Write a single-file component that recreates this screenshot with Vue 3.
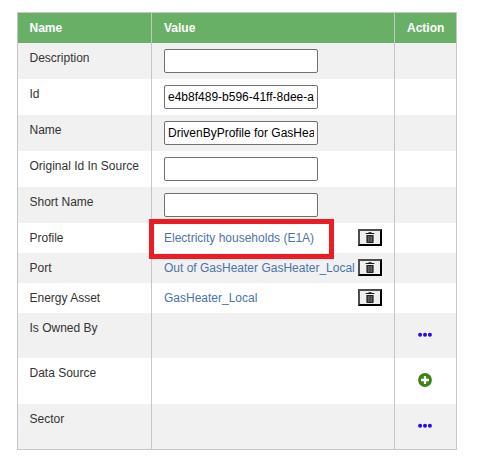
<script setup>
const rows = [
  { name: 'Description', kind: 'input', value: '', size: 'field' },
  { name: 'Id', kind: 'input', value: 'e4b8f489-b596-41ff-8dee-a', size: 'field' },
  { name: 'Name', kind: 'input', value: 'DrivenByProfile for GasHeater', size: 'field' },
  { name: 'Original Id In Source', kind: 'input', value: '', size: 'field' },
  { name: 'Short Name', kind: 'input', value: '', size: 'field' },
  { name: 'Profile', kind: 'link', value: 'Electricity households (E1A)', size: 'ref', marked: true },
  { name: 'Port', kind: 'link', value: 'Out of GasHeater GasHeater_Local', size: 'ref' },
  { name: 'Energy Asset', kind: 'link', value: 'GasHeater_Local', size: 'ref' },
  { name: 'Is Owned By', action: 'more', size: 'tall' },
  { name: 'Data Source', action: 'add', size: 'taller' },
  { name: 'Sector', action: 'more', size: 'tall' },
]
</script>

<template>
  <main class="page">
    <div class="table">
      <div class="row head">
        <div class="cell">Name</div>
        <div class="cell">Value</div>
        <div class="cell">Action</div>
      </div>
      <div v-for="row in rows" :key="row.name" class="row" :class="row.size">
        <div class="cell">{{ row.name }}</div>
        <div class="cell value">
          <input v-if="row.kind === 'input'" type="text" :value="row.value" />
          <template v-if="row.kind === 'link'">
            <a>{{ row.value }}</a>
            <button type="button" aria-label="Delete">
              <svg width="10" height="11" viewBox="0 0 10 11">
                <path d="M3.5 0h3v1h-3z" fill="#444" />
                <path d="M.7 1h8.6v1H.7z" fill="#151515" />
                <path d="M1.4 3h7.2v7.2q0 .8-.8.8H2.2q-.8 0-.8-.8z" fill="#222" />
                <path d="M3.3 4v6M5 4v6M6.7 4v6" stroke="#999" stroke-width=".7" />
              </svg>
            </button>
            <span v-if="row.marked" class="marker"></span>
          </template>
        </div>
        <div class="cell action">
          <svg v-if="row.action === 'more'" width="14" height="14" viewBox="0 0 14 14" fill="#3005f5">
            <circle cx="2.1" cy="6.8" r="2" />
            <circle cx="7" cy="6.8" r="2" />
            <circle cx="11.9" cy="6.8" r="2" />
          </svg>
          <svg v-if="row.action === 'add'" width="14" height="14" viewBox="0 0 14 14">
            <circle cx="7" cy="7" r="6.9" fill="#3c8218" />
            <path d="M7 3v8M3 7h8" stroke="#fff" stroke-width="2.3" />
          </svg>
        </div>
      </div>
    </div>
  </main>
</template>

<style>
body {
  margin: 0;
  background: #fff;
}
</style>

<style scoped>
.page {
  padding: 12px 0 0 17px;
  font: 12px/18px "Liberation Sans", Arial, sans-serif;
  color: #333;
}
.table {
  box-sizing: border-box;
  width: 440px;
  border: 1px solid #c6c6c6;
}
.row {
  display: grid;
  grid-template-columns: 133px 243px 62px;
  background: #fff;
}
.row:nth-child(even) {
  background: #f1f1f1;
}
.row.head {
  height: 30px;
  background: #69b067;
  color: #fff;
  font-weight: bold;
}
.field { height: 36px; }
.ref { height: 30px; }
.tall { height: 45px; }
.taller { height: 46px; }
.cell {
  box-sizing: border-box;
  padding: 6px 0 0 12px;
  white-space: nowrap;
}
.cell:first-child {
  padding-left: 11.5px;
}
.cell + .cell {
  border-left: 1px solid #c6c6c6;
}
.value {
  position: relative;
  display: flex;
  align-items: flex-start;
}
input {
  box-sizing: border-box;
  width: 154px;
  height: 24px;
  margin: 0;
  padding: 1px 3px;
  border: 1px solid #707070;
  border-radius: 2px;
  background: #fff;
  color: #000;
  font: 12px "Liberation Sans", Arial, sans-serif;
}
a {
  color: #4b74aa;
}
button {
  box-sizing: border-box;
  display: flex;
  align-items: center;
  justify-content: center;
  width: 24px;
  height: 17px;
  margin: 0 12px 0 auto;
  padding: 0;
  border: 2px solid;
  border-color: #4c4c4c #000 #000 #4c4c4c;
  background: #efefef;
}
.marker {
  position: absolute;
  left: -3px;
  top: -4px;
  z-index: 1;
  box-sizing: border-box;
  width: 185px;
  height: 40px;
  border: 5px solid #ed1c24;
}
.action {
  display: flex;
  align-items: flex-start;
  padding: 15px 0 0 23px;
}
</style>
